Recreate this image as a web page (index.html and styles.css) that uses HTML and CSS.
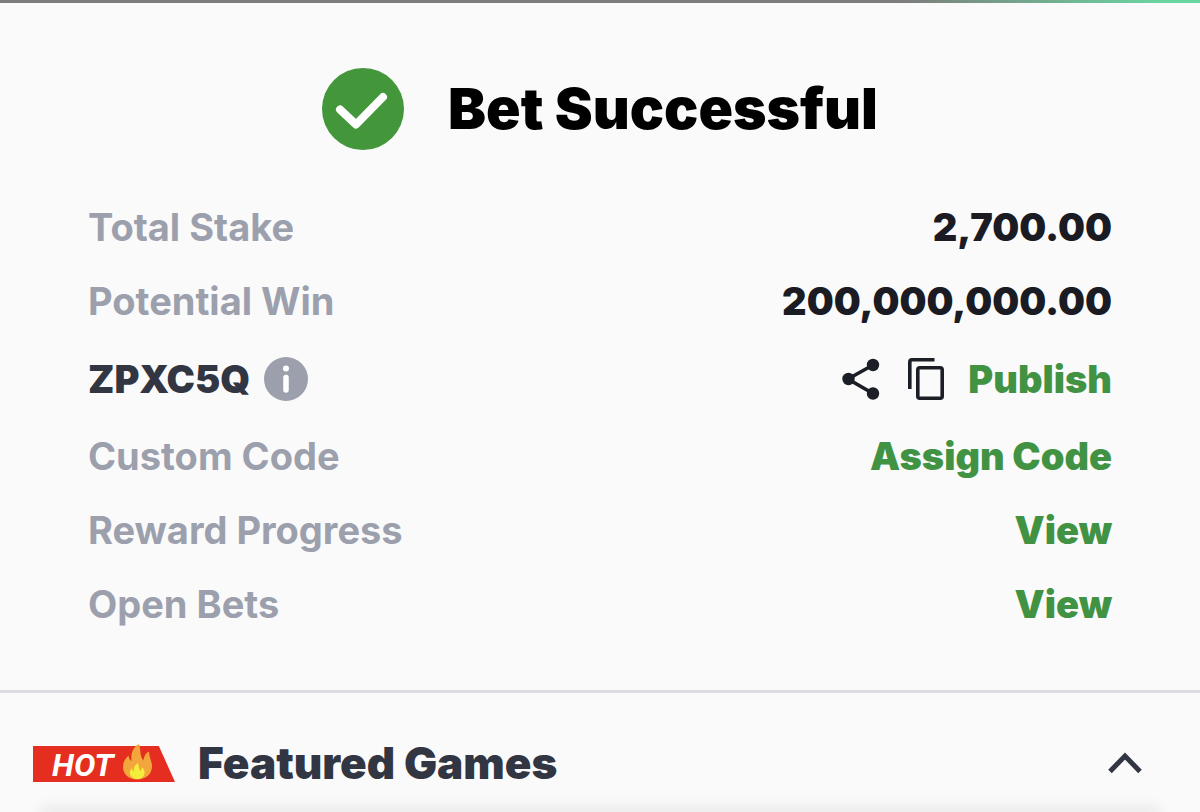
FILE: index.html
```html
<!DOCTYPE html>
<html lang="en">
<head>
<meta charset="utf-8">
<meta name="viewport" content="width=device-width, initial-scale=1">
<title>Bet Successful</title>
<link rel="stylesheet" href="styles.css">
</head>
<body>
<div class="topbar"></div>
<main>
  <section class="receipt">
    <header class="receipt-head">
      <svg class="check" viewBox="0 0 82 82" aria-hidden="true"><circle cx="41" cy="41" r="41" fill="#43963a"/><path d="M18 41.500 34 56.500 61 29" fill="none" stroke="#fff" stroke-width="8" stroke-linecap="round" stroke-linejoin="round"/></svg>
      <h1 class="title">Bet Successful</h1>
    </header>
    <dl class="rows">
      <div class="row"><dt class="label">Total Stake</dt><dd class="value">2,700.00</dd></div>
      <div class="row"><dt class="label">Potential Win</dt><dd class="value">200,000,000.00</dd></div>
      <div class="row row-code">
        <dt class="code">ZPXC5Q
          <button class="icon-btn" type="button" aria-label="About booking code"><svg class="info" viewBox="0 0 44 44"><circle cx="22" cy="22" r="22" fill="#9ca0ad"/><circle cx="22" cy="11.500" r="3" fill="#fff"/><path d="M22 20.500V33" stroke="#fff" stroke-width="5.500" stroke-linecap="round"/></svg></button>
        </dt>
        <dd class="actions">
          <button class="icon-btn" type="button" aria-label="Share"><svg class="share" viewBox="0 0 38 42" fill="#1b1e25"><path d="M31 7 6 21 31 35.500" fill="none" stroke="#1b1e25" stroke-width="3.600"/><circle cx="31" cy="7" r="6.200"/><circle cx="6.500" cy="21" r="6.200"/><circle cx="31" cy="35.500" r="6.200"/></svg></button>
          <button class="icon-btn" type="button" aria-label="Copy"><svg class="copy" viewBox="0 0 36 42" fill="none" stroke="#1b1e25" stroke-width="3.600"><path d="M1.800 31V4Q1.800 1.800 4 1.800H26.500"/><rect x="9.800" y="9.800" width="24.400" height="30.400" rx="2"/></svg></button>
          <button class="action" type="button">Publish</button>
        </dd>
      </div>
      <div class="row"><dt class="label">Custom Code</dt><dd><button class="action" type="button">Assign Code</button></dd></div>
      <div class="row"><dt class="label">Reward Progress</dt><dd><a class="action" href="#rewards">View</a></dd></div>
      <div class="row"><dt class="label">Open Bets</dt><dd><a class="action" href="#bets">View</a></dd></div>
    </dl>
  </section>
  <section class="featured">
    <div class="featured-head">
      <span class="hot"><span class="hot-text">HOT</span><svg class="flame" viewBox="0 0 30 36" aria-hidden="true"><path d="M17 0C10 4 9 10 9.500 17 7.500 16 7 14 6.500 11.500 3 15 1 18.500 1 23 1 30.500 7 35.500 15 35.500S30 30.500 30 22.500C30 17 27.500 15 27 7.500 23 9.500 22 13 21.500 16.500 17.500 12 19 6 17 0Z" fill="#f2a63b"/><path d="M16 19C12.500 21 11.500 24 12 27.500 10.500 26.500 10 25.500 10 24 8 26 7.500 28 8 30 9 33.500 12 35 15.500 35S22 33 22.500 29.500C23 27 21.500 25.500 21 23.500 19.500 24.500 19 26 19 27.500 16.500 25 17 22 16 19Z" fill="#f5ed3b"/></svg></span>
      <h2 class="featured-title">Featured Games</h2>
      <button class="icon-btn toggle" type="button" aria-label="Collapse featured games"><svg class="chevron" viewBox="0 0 34 22"><path d="M2 19.500 17 4 32 19.500" fill="none" stroke="#323643" stroke-width="5"/></svg></button>
    </div>
    <div class="games"></div>
  </section>
</main>
</body>
</html>
```
FILE: styles.css
```css
* { box-sizing: border-box; }
body {
  margin: 0;
  background: #fafafb;
  color: #323643;
  font-family: Inter, "Liberation Sans", sans-serif;
}
.topbar {
  height: 3px;
  background: linear-gradient(90deg, #7d7c7b 75%, #69d6a1 97%);
}
.receipt {
  padding: 65px 88px 62px;
  border-bottom: 3px solid #dcdce4;
}
.receipt-head {
  display: flex;
  align-items: center;
  justify-content: center;
  gap: 44px;
}
svg { display: block; }
.check { width: 82px; height: 82px; }
.title {
  margin: 0;
  color: #000;
  font-size: 57px;
  line-height: 64px;
  font-weight: 900;
}
.rows {
  display: flex;
  flex-direction: column;
  gap: 26px;
  margin: 53px 0 0;
}
.row {
  display: flex;
  align-items: center;
  justify-content: space-between;
  min-height: 48px;
  font-size: 38px;
  line-height: 48px;
}
.row-code { min-height: 55px; }
dd { margin: 0; }
.label { color: #9ca0ad; font-weight: 700; }
.value { color: #1b1b23; font-weight: 900; }
.code {
  display: flex;
  align-items: center;
  gap: 14px;
  font-weight: 900;
}
.info { width: 44px; height: 44px; }
.actions { display: flex; align-items: center; }
.icon-btn {
  padding: 0;
  border: 0;
  background: none;
  cursor: pointer;
}
.share { width: 38px; height: 42px; margin-right: 28px; }
.copy { width: 36px; height: 42px; margin-right: 24px; }
.action {
  display: block;
  padding: 0;
  border: 0;
  background: none;
  color: #419343;
  font: inherit;
  font-weight: 900;
  text-decoration: none;
  cursor: pointer;
}
.featured-head {
  display: flex;
  align-items: center;
  padding: 43px 58px 22px 33px;
}
.hot {
  display: flex;
  align-items: flex-start;
  gap: 8px;
  width: 142px;
  height: 38px;
  padding-left: 19px;
  background: linear-gradient(transparent 2px, #e52e20 2px);
  clip-path: polygon(0 0, 88% 0, 100% 100%, 0 100%);
  color: #fff;
  font: italic 700 32px/42px Roboto, sans-serif;
}
.flame { width: 30px; height: 36px; }
.featured-title {
  margin: 0 auto 0 23px;
  font-size: 44px;
  line-height: 54px;
  font-weight: 900;
}
.chevron { width: 34px; height: 22px; }
.games {
  margin: 0 44px;
  box-shadow: 0 0 14px 4px rgba(0, 0, 0, 0.1);
}
```
